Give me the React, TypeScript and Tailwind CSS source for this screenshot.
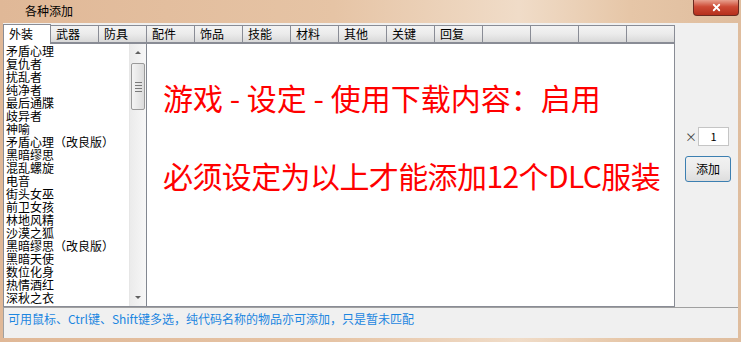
import { X } from 'lucide-react';

const tabs = ['外装', '武器', '防具', '配件', '饰品', '技能', '材料', '其他', '关键', '回复', '', '', '', ''];

const items = [
  '矛盾心理',
  '复仇者',
  '扰乱者',
  '纯净者',
  '最后通牒',
  '歧异者',
  '神喻',
  '矛盾心理（改良版）',
  '黑暗缪思',
  '混乱螺旋',
  '电音',
  '街头女巫',
  '前卫女孩',
  '林地风精',
  '沙漠之狐',
  '黑暗缪思（改良版）',
  '黑暗天使',
  '数位化身',
  '热情酒红',
  '深秋之衣',
];

const font = { fontFamily: '"Noto Sans CJK SC", "Noto Sans", sans-serif' };

function ScrollBar() {
  return (
    <div className="w-[17px] flex flex-col bg-[linear-gradient(to_right,#ebebeb,#f7f7f7)] border-l border-[#e6e6e6]">
      <div className="h-[17px] flex items-center justify-center">
        <div className="w-0 h-0 border-l-[3px] border-r-[3px] border-b-[3px] border-l-transparent border-r-transparent border-b-[#606060]" />
      </div>
      <div className="mt-[2px] mx-[1px] h-[47px] rounded-[2px] border border-[#9a9a9a] bg-[linear-gradient(to_right,#f4f4f4,#dcdcdc)] flex flex-col items-center justify-center gap-[2px]">
        <div className="w-[7px] h-px bg-[#7a7a7a]" />
        <div className="w-[7px] h-px bg-[#7a7a7a]" />
        <div className="w-[7px] h-px bg-[#7a7a7a]" />
        <div className="w-[7px] h-px bg-[#7a7a7a]" />
      </div>
      <div className="flex-1" />
      <div className="h-[17px] flex items-center justify-center">
        <div className="w-0 h-0 border-l-[3px] border-r-[3px] border-t-[3px] border-l-transparent border-r-transparent border-t-[#606060]" />
      </div>
    </div>
  );
}

export default function App() {
  return (
    <div
      className="w-[741px] h-[342px] flex flex-col bg-[linear-gradient(to_right,#e0b897,#e6c4a5_45%,#f0dcc8_70%,#e6c6a7_85%,#dfbd9e)] text-black"
      style={font}
    >
      {/* title bar */}
      <div className="h-[23px] flex items-start justify-between">
        <span className="pl-[25px] pt-[3px] text-[12px] leading-[16px]">各种添加</span>
        <div className="mr-[2px] w-[46px] h-[16px] rounded-b-[4px] border border-t-0 border-[#6b2a20] bg-[linear-gradient(to_bottom,#e8a08e,#cd4a35_45%,#b52f1c)] flex items-center justify-center">
          <X className="w-[11px] h-[11px] text-white" strokeWidth={4} />
        </div>
      </div>

      {/* client */}
      <div className="flex-1 mx-[3px] mb-[4px] bg-[#f0f0f0] flex flex-col">
        <div className="h-[284px] flex">
          <div className="w-[672px] flex flex-col">
            <div className="h-[20px] flex items-end">
              {tabs.map((t, i) =>
                i === 0 ? (
                  <div
                    key={i}
                    className="w-[48px] h-[20px] -mb-px z-10 bg-white border border-b-0 border-[#898c95] pl-[5px] text-[12px] leading-[18px]"
                  >
                    {t}
                  </div>
                ) : (
                  <div
                    key={i}
                    className="w-[48px] h-[18px] bg-[linear-gradient(to_bottom,#f3f3f3,#ebebeb_50%,#d8d8d8)] border border-l-0 border-[#898c95] pl-[5px] text-[12px] leading-[16px]"
                  >
                    {t}
                  </div>
                )
              )}
            </div>
            <div className="flex-1 border border-[#898c95] bg-white flex">
              <div className="w-[143px] flex border-r border-[#828790]">
                <div className="flex-1 pl-[2px] text-[12px] leading-[13px]">
                  {items.map((t, i) => (
                    <div key={i} className="whitespace-nowrap">
                      {t}
                    </div>
                  ))}
                </div>
                <ScrollBar />
              </div>
              <div className="flex-1 pl-[16px] pt-[35px] text-[#ff0000] text-[30px] leading-[36px]">
                <div className="whitespace-nowrap">游戏 - 设定 - 使用下载内容：启用</div>
                <div className="mt-[42px] whitespace-nowrap tracking-[-0.6px]">必须设定为以上才能添加12个DLC服装</div>
              </div>
            </div>
          </div>
          <div className="flex-1 pt-[104px] pl-[10px] flex flex-col">
            <div className="flex items-center h-[19px]">
              <span className="w-[13px] text-[12px] text-[#444]">×</span>
              <div className="w-[31px] h-[19px] border border-[#c5c5c5] bg-white text-center text-[11px] leading-[17px]">1</div>
            </div>
            <div className="mt-[10px] w-[46px] h-[26px] rounded-[3px] border border-[#3c7fb1] bg-[linear-gradient(to_bottom,#f2f2f2,#ebebeb_50%,#dddddd)] flex items-center justify-center text-[12px]">
              添加
            </div>
          </div>
        </div>
        <div className="flex-1 border-t border-l border-[#a0a0a0] pl-[4px] pt-[3px] text-[12px] leading-[16px] text-[#1c86e0] whitespace-nowrap">
          可用鼠标、Ctrl键、Shift键多选，纯代码名称的物品亦可添加，只是暂未匹配
        </div>
      </div>
    </div>
  );
}
